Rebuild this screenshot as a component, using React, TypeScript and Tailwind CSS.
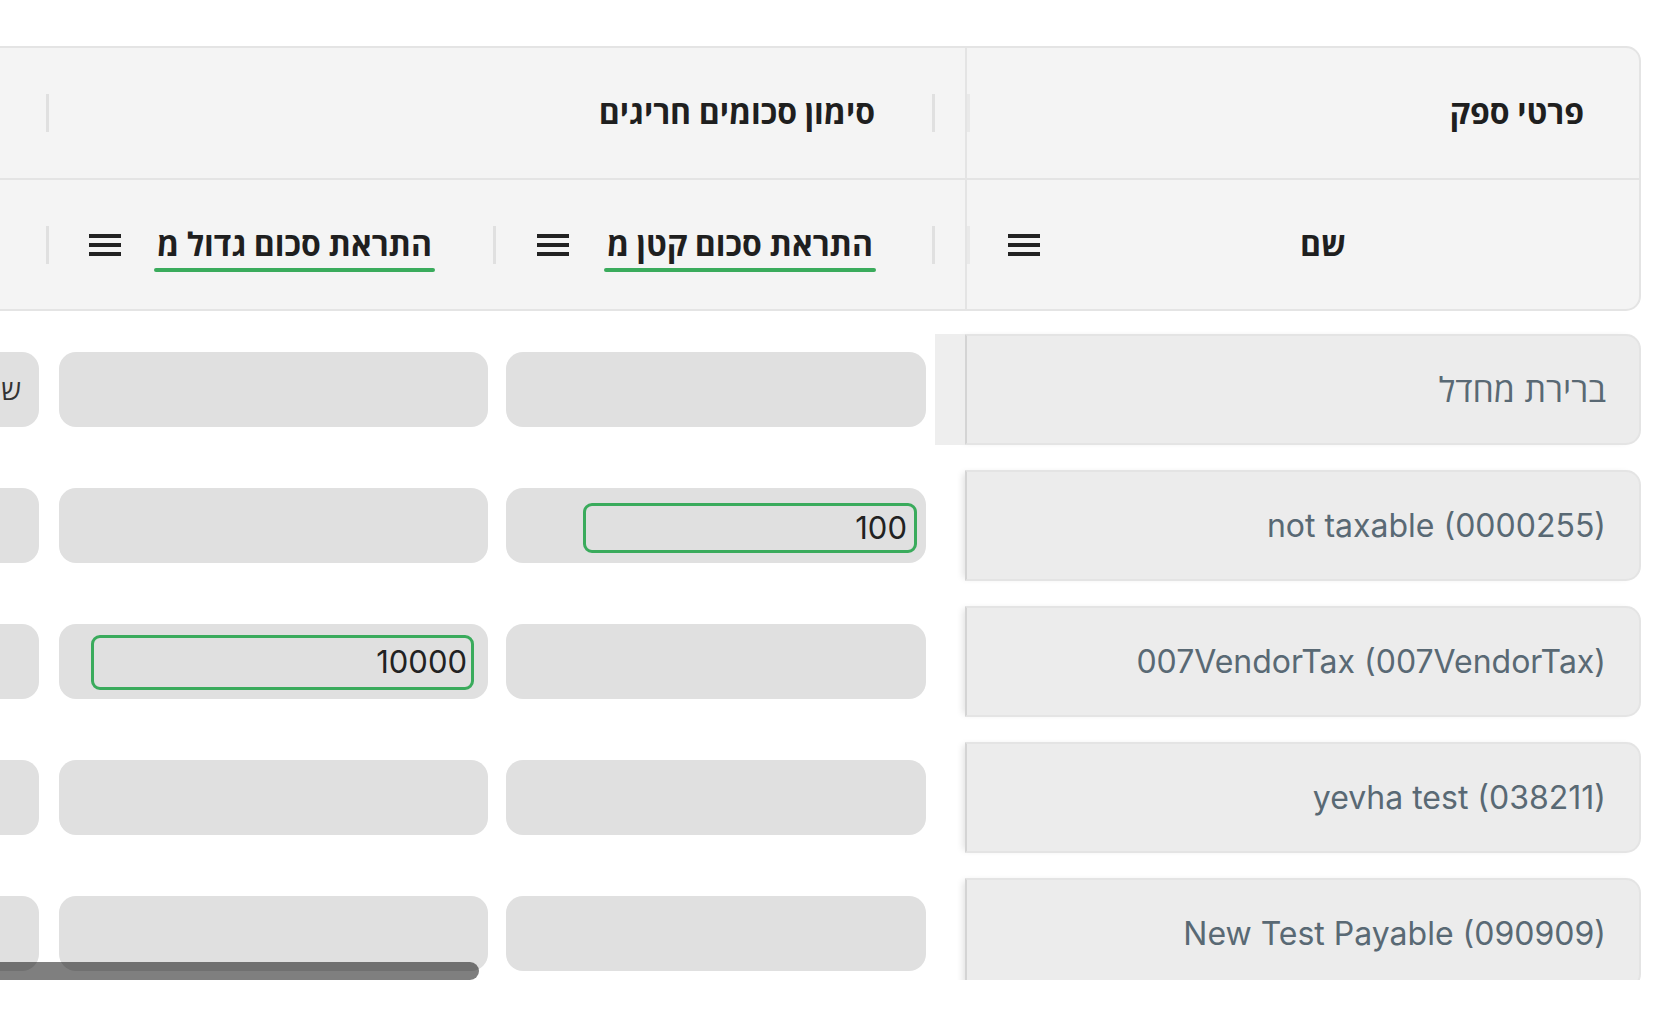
import React from "react";

function Handle({ faint = false }: { faint?: boolean }) {
  return (
    <div
      className={
        "w-[3px] h-[38px] shrink-0 " + (faint ? "bg-[#e9e9e9]" : "bg-[#e0e0e0]")
      }
    />
  );
}

function Menu() {
  return (
    <div className="w-[32px] shrink-0 flex flex-col gap-[5px]">
      <div className="h-[4px] bg-[#222222]" />
      <div className="h-[4px] bg-[#222222]" />
      <div className="h-[4px] bg-[#222222]" />
    </div>
  );
}

function Label({ text }: { text: string }) {
  return (
    <div className="flex flex-col items-stretch pt-[12px]">
      <div className="px-[3px] text-[32px] leading-[30px] font-bold text-[#1f1f1f] whitespace-nowrap">
        {text}
      </div>
      <div className="mt-[8px] h-[4px] rounded-full bg-[#3aab5c]" />
    </div>
  );
}

function Header() {
  return (
    <div className="flex h-[265px]">
      {/* pinned header */}
      <div className="w-[676px] shrink-0 flex flex-col bg-[#f4f4f4] border-2 border-[#e4e4e4] rounded-tr-[15px] rounded-br-[15px]">
        <div className="h-[132px] border-b-2 border-[#e4e4e4] flex items-center">
          <div className="pr-[55px] flex-1 text-[32px] leading-[30px] font-bold text-[#1f1f1f] whitespace-nowrap">
            פרטי ספק
          </div>
          <Handle faint />
        </div>
        <div className="flex-1 flex items-center">
          <div className="pr-[293px] text-[32px] leading-[30px] font-bold text-[#1f1f1f] whitespace-nowrap">
            שם
          </div>
          <div className="flex-1" />
          <div className="ml-[38px]">
            <Menu />
          </div>
          <Handle faint />
        </div>
      </div>
      {/* center header */}
      <div className="flex-1 min-w-0 overflow-hidden flex flex-col bg-[#f4f4f4] border-y-2 border-[#e4e4e4]">
        <div className="h-[132px] border-b-2 border-[#e4e4e4] flex items-center">
          <div className="w-[30px] shrink-0" />
          <div className="w-[886px] shrink-0 flex items-center">
            <Handle />
            <div className="mr-[57px] text-[32px] leading-[30px] font-bold text-[#1f1f1f] whitespace-nowrap">
              סימון סכומים חריגים
            </div>
          </div>
          <div className="w-[400px] shrink-0 flex items-center">
            <Handle />
          </div>
        </div>
        <div className="flex-1 flex items-center">
          <div className="w-[30px] shrink-0" />
          <div className="w-[439px] shrink-0 flex items-center">
            <Handle />
            <div className="mr-[56px]">
              <Label text="התראת סכום קטן מ" />
            </div>
            <div className="flex-1" />
            <div className="ml-[41px]">
              <Menu />
            </div>
          </div>
          <div className="w-[447px] shrink-0 flex items-center">
            <Handle />
            <div className="mr-[58px]">
              <Label text="התראת סכום גדול מ" />
            </div>
            <div className="flex-1" />
            <div className="ml-[40px]">
              <Menu />
            </div>
          </div>
          <div className="w-[400px] shrink-0 flex items-center">
            <Handle />
          </div>
        </div>
      </div>
    </div>
  );
}

type RowData = {
  name: string;
  small?: string;
  big?: string;
  hover?: boolean;
  extra?: string;
  hebrew?: boolean;
};

const rows: RowData[] = [
  { name: "ברירת מחדל", hover: true, extra: "ש״ח", hebrew: true },
  { name: "not taxable (0000255)", small: "100" },
  { name: "007VendorTax (007VendorTax)", big: "10000" },
  { name: "yevha test (038211)" },
  { name: "New Test Payable (090909)" },
];

function GrayCell({ className, children }: { className: string; children?: React.ReactNode }) {
  return (
    <div className={"shrink-0 h-[75px] rounded-[17px] bg-[#e0e0e0] flex " + className}>
      {children}
    </div>
  );
}

function Row({ r }: { r: RowData }) {
  return (
    <div className="flex h-[111px] mb-[25px] shrink-0">
      <div className="w-[676px] shrink-0 flex items-center bg-[#ececec] border-2 border-[#e4e4e4] border-l-[#d4d4d4] rounded-tr-[15px] rounded-br-[15px] shadow-[-5px_0_7px_-3px_rgba(0,0,0,0.12)]">
        <div
          className={
            "pr-[33px] leading-[38px] text-[#596974] whitespace-nowrap " +
            (r.hebrew ? "text-[34px]" : "text-[32px]")
          }
        >
          {r.name}
        </div>
      </div>
      <div className={"w-[30px] shrink-0 " + (r.hover ? "bg-[#eeeeee]" : "")} />
      <div className="flex-1 min-w-0 overflow-hidden flex items-center">
        <GrayCell className="w-[420px] mr-[9px] ml-[10px] items-start">
          {r.small ? (
            <div className="mt-[15px] mr-[9px] w-[334px] h-[50px] rounded-[9px] border-[3px] border-[#3aab5c] flex items-center pr-[7px] text-[31px] text-[#222222]">
              {r.small}
            </div>
          ) : null}
        </GrayCell>
        <GrayCell className="w-[429px] mr-[8px] ml-[10px] items-start">
          {r.big ? (
            <div className="mt-[11px] mr-[14px] w-[383px] h-[55px] rounded-[9px] border-[3px] border-[#3aab5c] flex items-center pr-[4px] text-[31px] text-[#222222]">
              {r.big}
            </div>
          ) : null}
        </GrayCell>
        <GrayCell className="w-[400px] mr-[10px] items-center">
          {r.extra ? (
            <div className="mr-[18px] text-[28px] text-[#333333] whitespace-nowrap">{r.extra}</div>
          ) : null}
        </GrayCell>
      </div>
    </div>
  );
}

export default function App() {
  return (
    <div className="w-[1679px] h-[1010px] bg-white overflow-hidden font-[Inter,'Open_Sans','Liberation_Sans',sans-serif]">
      <div dir="rtl" className="pt-[46px] pr-[38px]">
        <Header />
        <div className="relative h-[669px] overflow-hidden">
          <div className="flex flex-col pt-[23px]">
            {rows.map((r, i) => (
              <Row key={i} r={r} />
            ))}
          </div>
          <div className="absolute bottom-0 left-[-12px] w-[491px] h-[18px] rounded-full bg-black/50" />
        </div>
      </div>
    </div>
  );
}
